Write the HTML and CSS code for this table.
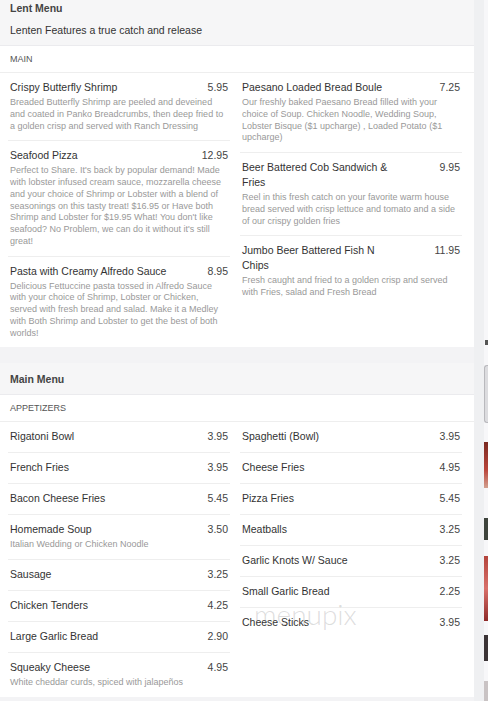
FILE: index.html
```html
<!DOCTYPE html>
<html lang="en">
<head>
<meta charset="utf-8">
<title>Menu</title>
<link rel="stylesheet" href="styles.css">
</head>
<body>
<div class="page">
  <main class="menu">
    <section class="section">
      <header class="sec-head">
        <h2 class="sec-title">Lent Menu</h2>
        <p class="sec-sub">Lenten Features a true catch and release</p>
      </header>
      <div class="cat">MAIN</div>
      <div class="cols">
        <div class="col">
          <div class="item">
            <div class="item-head"><span class="name">Crispy Butterfly Shrimp</span><span class="price">5.95</span></div>
            <p class="desc">Breaded Butterfly Shrimp are peeled and deveined and coated in Panko Breadcrumbs, then deep fried to a golden crisp and served with Ranch Dressing</p>
          </div>
          <div class="item">
            <div class="item-head"><span class="name">Seafood Pizza</span><span class="price">12.95</span></div>
            <p class="desc">Perfect to Share. It's back by popular demand! Made with lobster infused cream sauce, mozzarella cheese and your choice of Shrimp or Lobster with a blend of seasonings on this tasty treat! $16.95 or Have both Shrimp and Lobster for $19.95 What! You don't like seafood? No Problem, we can do it without it's still great!</p>
          </div>
          <div class="item">
            <div class="item-head"><span class="name">Pasta with Creamy Alfredo Sauce</span><span class="price">8.95</span></div>
            <p class="desc">Delicious Fettuccine pasta tossed in Alfredo Sauce with your choice of Shrimp, Lobster or Chicken, served with fresh bread and salad. Make it a Medley with Both Shrimp and Lobster to get the best of both worlds!</p>
          </div>
        </div>
        <div class="col">
          <div class="item">
            <div class="item-head"><span class="name">Paesano Loaded Bread Boule</span><span class="price">7.25</span></div>
            <p class="desc">Our freshly baked Paesano Bread filled with your choice of Soup. Chicken Noodle, Wedding Soup, Lobster Bisque ($1 upcharge) , Loaded Potato ($1 upcharge)</p>
          </div>
          <div class="item">
            <div class="item-head"><span class="name">Beer Battered Cob Sandwich &amp; Fries</span><span class="price">9.95</span></div>
            <p class="desc">Reel in this fresh catch on your favorite warm house bread served with crisp lettuce and tomato and a side of our crispy golden fries</p>
          </div>
          <div class="item">
            <div class="item-head"><span class="name">Jumbo Beer Battered Fish N Chips</span><span class="price">11.95</span></div>
            <p class="desc">Fresh caught and fried to a golden crisp and served with Fries, salad and Fresh Bread</p>
          </div>
        </div>
      </div>
    </section>

    <section class="section">
      <header class="sec-head">
        <h2 class="sec-title">Main Menu</h2>
      </header>
      <div class="cat">APPETIZERS</div>
      <div class="cols">
        <div class="col">
          <div class="item"><div class="item-head"><span class="name">Rigatoni Bowl</span><span class="price">3.95</span></div></div>
          <div class="item"><div class="item-head"><span class="name">French Fries</span><span class="price">3.95</span></div></div>
          <div class="item"><div class="item-head"><span class="name">Bacon Cheese Fries</span><span class="price">5.45</span></div></div>
          <div class="item">
            <div class="item-head"><span class="name">Homemade Soup</span><span class="price">3.50</span></div>
            <p class="desc">Italian Wedding or Chicken Noodle</p>
          </div>
          <div class="item"><div class="item-head"><span class="name">Sausage</span><span class="price">3.25</span></div></div>
          <div class="item"><div class="item-head"><span class="name">Chicken Tenders</span><span class="price">4.25</span></div></div>
          <div class="item"><div class="item-head"><span class="name">Large Garlic Bread</span><span class="price">2.90</span></div></div>
          <div class="item">
            <div class="item-head"><span class="name">Squeaky Cheese</span><span class="price">4.95</span></div>
            <p class="desc">White cheddar curds, spiced with jalapeños</p>
          </div>
        </div>
        <div class="col">
          <div class="item"><div class="item-head"><span class="name">Spaghetti (Bowl)</span><span class="price">3.95</span></div></div>
          <div class="item"><div class="item-head"><span class="name">Cheese Fries</span><span class="price">4.95</span></div></div>
          <div class="item"><div class="item-head"><span class="name">Pizza Fries</span><span class="price">5.45</span></div></div>
          <div class="item"><div class="item-head"><span class="name">Meatballs</span><span class="price">3.25</span></div></div>
          <div class="item"><div class="item-head"><span class="name">Garlic Knots W/ Sauce</span><span class="price">3.25</span></div></div>
          <div class="item"><div class="item-head"><span class="name">Small Garlic Bread</span><span class="price">2.25</span></div></div>
          <div class="item"><div class="item-head"><span class="name">Cheese Sticks</span><span class="price">3.95</span></div></div>
        </div>
      </div>
    </section>
  </main>

  <aside class="side">
    <div class="rail">
      <div class="thumb mark"></div>
      <div class="thumb card"></div>
      <div class="thumb photo-a"></div>
      <div class="thumb photo-b"></div>
      <div class="thumb photo-c"></div>
      <div class="thumb photo-d"></div>
      <div class="thumb photo-e"></div>
    </div>
  </aside>

  <div class="watermark">menupix</div>
</div>
</body>
</html>
```
FILE: styles.css
```css
* { box-sizing: border-box; }

body {
  margin: 0;
  background: #f3f3f5;
  font-family: "Liberation Sans", Arial, sans-serif;
}

.page {
  position: relative;
  display: flex;
  width: 488px;
  height: 701px;
  overflow: hidden;
}

.menu {
  width: 474px;
  flex: none;
  margin-top: -8px;
}

.section {
  background: #fff;
}

.section + .section {
  margin-top: 16px;
}

.sec-head {
  background: #f6f6f7;
  padding: 8px 10px 7px;
  border-bottom: 1px solid #ebebee;
}

.sec-title {
  margin: 0;
  font-size: 10.5px;
  line-height: 16px;
  font-weight: bold;
  color: #444;
}

.sec-sub {
  margin: 6px 0 0;
  font-size: 10.5px;
  line-height: 16px;
  color: #333;
}

.cat {
  padding: 6px 10px;
  font-size: 9px;
  line-height: 14px;
  color: #555;
  border-bottom: 1px solid #eeeeee;
}

.cols {
  display: grid;
  grid-template-columns: 222px 222px;
  column-gap: 10px;
  padding: 0 12px 0 8px;
}

.item {
  padding: 7px 2px 8px;
}

.item + .item {
  border-top: 1px solid #eeeeee;
}

.item-head {
  display: flex;
  justify-content: space-between;
  align-items: flex-start;
}

.name {
  max-width: 73%;
  font-size: 10.5px;
  line-height: 15px;
  color: #333;
}

.price {
  font-size: 10.5px;
  line-height: 15px;
  color: #444;
}

.desc {
  margin: 2px 0 0;
  font-size: 9px;
  line-height: 11.75px;
  color: #999;
}

.side {
  flex: 1;
  background: #eff0f2;
  padding-left: 10px;
}

.rail {
  height: 100%;
  background: #f7f7f9;
  padding-top: 340px;
}

.thumb {
  width: 4px;
}

.mark {
  height: 5px;
  margin-left: 1px;
  width: 3px;
  background: #555;
}

.card {
  margin-top: 20px;
  height: 58px;
  background: #dcdcdf;
  border: 1px solid #b9b9bd;
  border-right: none;
  border-radius: 3px 0 0 3px;
}

.photo-a {
  margin-top: 19px;
  height: 46px;
  background: linear-gradient(#7a2a22, #b9443a 60%, #d3a08f);
}

.photo-b {
  margin-top: 30px;
  height: 22px;
  background: #3e443c;
}

.photo-c {
  margin-top: 16px;
  height: 65px;
  background: linear-gradient(#b3443c, #d8706a 50%, #8e2a28);
}

.photo-d {
  margin-top: 14px;
  height: 26px;
  background: #3b3436;
}

.photo-e {
  margin-top: 20px;
  height: 20px;
  background: #c9c3c4;
}

.watermark {
  position: absolute;
  left: 254px;
  top: 600px;
  font-family: Lato, "Open Sans", sans-serif;
  font-weight: 300;
  font-size: 28px;
  line-height: 28px;
  color: rgba(120, 120, 120, 0.25);
  pointer-events: none;
}
```
